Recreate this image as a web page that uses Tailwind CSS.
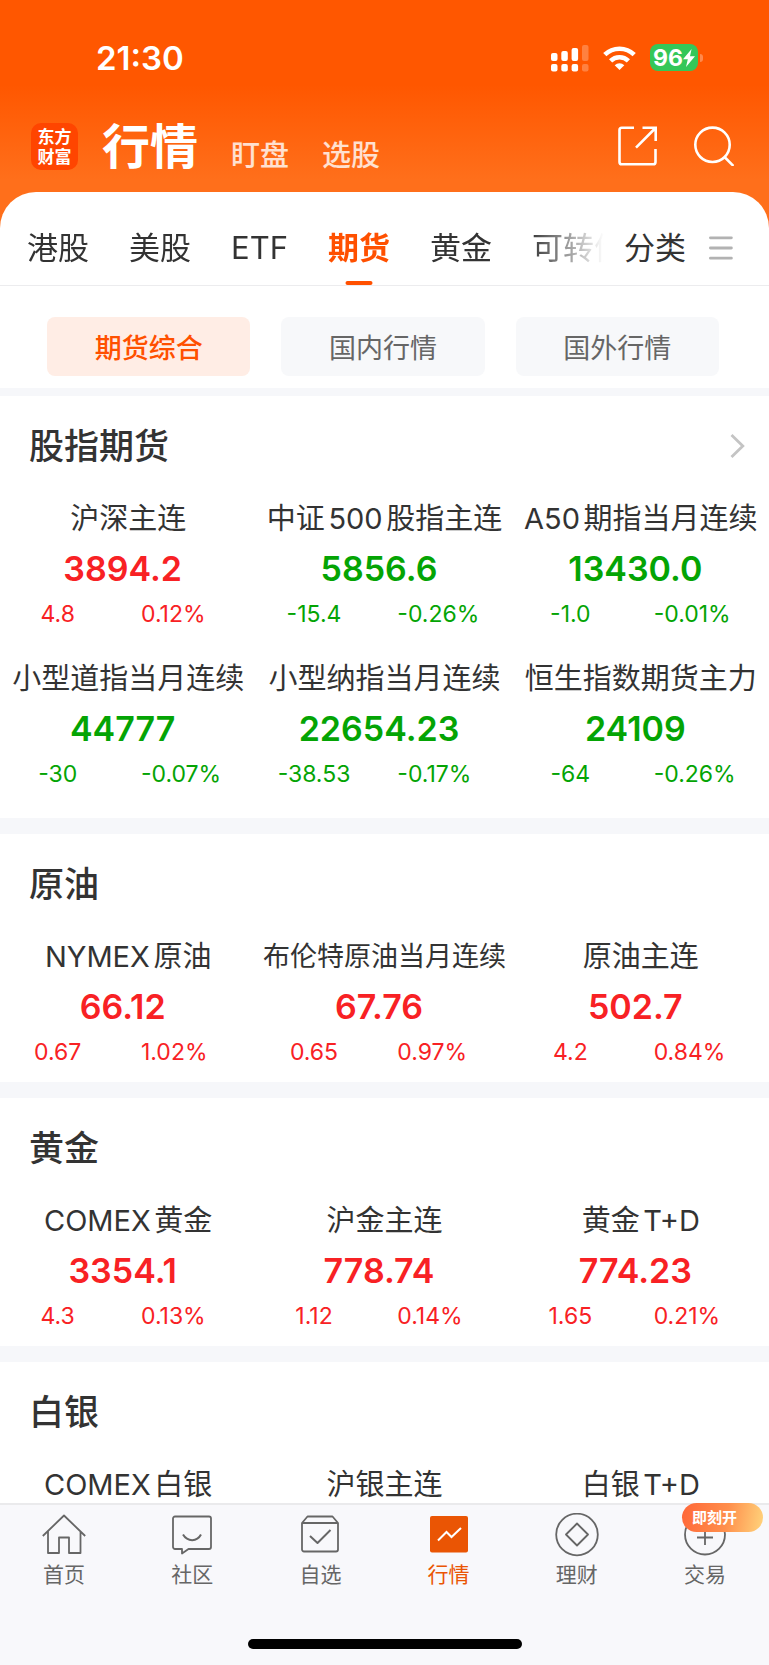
<!DOCTYPE html>
<html lang="zh-CN">
<head>
<meta charset="utf-8">
<meta name="viewport" content="width=device-width, initial-scale=1">
<title>行情 - 期货</title>
<script src="https://cdn.jsdelivr.net/npm/@tailwindcss/browser@4"></script>
</head>
<body class="flex h-screen flex-col overflow-hidden bg-[linear-gradient(180deg,#ff5700_0px,#ff5700_85px,#ff6f1b_180px)] font-['Inter','Noto_Sans_CJK_SC',sans-serif] text-[#333] [text-autospace:normal]">

<header class="shrink-0 text-white">
  <!-- Status bar -->
  <div class="flex h-[115px] items-center pr-[66px] pl-24">
    <span class="text-[33px] leading-10 font-semibold">21:30</span>
    <div class="ml-auto flex items-center gap-3.5">
      <svg class="h-7 w-[38px]" viewBox="0 0 38 28" fill="#fff" aria-hidden="true">
        <rect x="0" y="9" width="6.5" height="8" rx="2"/><rect x="10.300" y="7" width="6.500" height="10" rx="2"/><rect x="20.600" y="4" width="6.500" height="13" rx="2"/><rect x="31" y="1" width="6.500" height="16" rx="2" opacity=".25"/>
        <rect x="0" y="20" width="6.500" height="7.500" rx="2"/><rect x="10.300" y="20" width="6.500" height="7.500" rx="2"/><rect x="20.600" y="20" width="6.500" height="7.500" rx="2"/><rect x="31" y="20" width="6.500" height="7.500" rx="2" opacity=".25"/>
      </svg>
      <svg class="h-6 w-[33px]" viewBox="0 0 33 24" aria-hidden="true">
        <g fill="none" stroke="#fff" stroke-width="4.600"><path d="M1.800 8.700a21 21 0 0 1 29.400 0"/><path d="M7.600 14.800a12.800 12.800 0 0 1 17.800 0"/></g>
        <path d="M16.500 24l-4.800-4.800a7 7 0 0 1 9.600 0z" fill="#fff"/>
      </svg>
      <div class="flex items-center gap-0.5">
        <div class="flex h-[27px] w-12 items-center justify-center rounded-lg bg-[#34c759] text-[23px] leading-6 font-bold">96<svg class="h-[18px] w-3" viewBox="0 0 12 18" fill="#fff" aria-hidden="true"><path d="M8.600 0L0 10.300h4.800L3 18l9-10.800H7z"/></svg></div>
        <span class="h-2 w-[3px] rounded-r bg-white/30"></span>
      </div>
    </div>
  </div>
  <!-- Title bar -->
  <div class="flex h-[77px] items-start pr-[35px] pl-[31px]">
    <div class="mt-2 flex size-[47px] flex-col items-center justify-center rounded-[10px] bg-[#ff4500] text-[17px] leading-5 font-bold"><span>东方</span><span>财富</span></div>
    <div class="mt-0.5 ml-6 flex items-end gap-[33px]">
      <h1 class="text-5xl leading-[60px] font-bold">行情</h1>
      <a href="#watch" class="text-[29px] leading-[42px] font-medium text-white/80">盯盘</a>
      <a href="#pick" class="text-[29px] leading-[42px] font-medium text-white/80">选股</a>
    </div>
    <button type="button" aria-label="分享" class="mt-[11px] ml-auto">
      <svg class="size-10" viewBox="0 0 40 40" fill="none" stroke="#fff" stroke-width="2.600"><path d="M16 1.800H3.800a2.300 2.300 0 0 0-2.300 2.300v31.800a2.300 2.300 0 0 0 2.300 2.300h31.400a2.300 2.300 0 0 0 2.300-2.300V23"/><path d="M24.500 1.800h13.200V15M37.500 2L18 21.600"/></svg>
    </button>
    <button type="button" aria-label="搜索" class="mt-[11px] ml-9">
      <svg class="size-10" viewBox="0 0 40 40" fill="none" stroke="#fff" stroke-width="2.600"><circle cx="18.500" cy="18.800" r="17.200"/><path d="M30.500 31l9 9"/></svg>
    </button>
  </div>
</header>

<main class="flex min-h-0 flex-1 flex-col overflow-hidden rounded-t-[36px] bg-white">
  <!-- Market tabs -->
  <div class="flex h-[94px] shrink-0 border-b border-[#ececee] pr-9 pl-[27px]">
    <div class="flex min-w-0 flex-1 gap-10 overflow-hidden text-[31px] leading-[40px] whitespace-nowrap mask-[linear-gradient(90deg,#000_calc(100%_-_75px),transparent)]">
      <button type="button" class="shrink-0 pt-[18px]">港股</button>
      <button type="button" class="shrink-0 pt-[18px]">美股</button>
      <button type="button" class="shrink-0 pt-[18px]">ETF</button>
      <button type="button" class="relative shrink-0 pt-[18px] font-bold text-[#ff5000]">期货<span class="absolute bottom-0 left-1/2 h-1 w-[27px] -translate-x-1/2 rounded-full bg-[#ff5000]"></span></button>
      <button type="button" class="shrink-0 pt-[18px]">黄金</button>
      <button type="button" class="shrink-0 pt-[18px]">可转债</button>
    </div>
    <button type="button" class="ml-5 flex shrink-0 items-center gap-[23px] pt-[18px] text-[31px] leading-[40px]">分类
      <svg class="h-6 w-6" viewBox="0 0 24 24" stroke="#b2b2b2" stroke-width="2.800" stroke-linecap="round" aria-hidden="true"><path d="M1.400 1.800h21M1.400 12h21M1.400 22.200h21"/></svg>
    </button>
  </div>
  <!-- Scope switch -->
  <div class="flex h-[102px] shrink-0 items-start gap-[31px] pt-[31px] pr-[50px] pl-[47px] text-[27px] leading-9">
    <button type="button" class="h-[59px] flex-1 rounded-lg bg-[#ffede5] pt-1 font-medium text-[#ff5000]">期货综合</button>
    <button type="button" class="h-[59px] flex-1 rounded-lg bg-[#f7f8fa] pt-1 text-[#666]">国内行情</button>
    <button type="button" class="h-[59px] flex-1 rounded-lg bg-[#f7f8fa] pt-1 text-[#666]">国外行情</button>
  </div>
  <div class="h-2 shrink-0 bg-[#f6f7fa]"></div>

  <section class="shrink-0 border-b-16 border-[#f6f7fa] pb-3.5">
    <div class="flex h-[100px] items-center justify-between pr-6 pl-[29px]">
      <h2 class="text-[35px] leading-[50px] font-medium">股指期货</h2>
      <a href="#index" aria-label="更多"><svg class="h-6 w-[15px]" viewBox="0 0 15 24" fill="none" stroke="#c4c4c4" stroke-width="2.800"><path d="M1.500 1l11.300 11L1.500 23"/></svg></a>
    </div>
    <div class="grid grid-cols-3 gap-y-3 whitespace-nowrap">
      <article class="h-[148px] text-[#f82124]"><h3 class="text-center text-[29px] leading-[46px] text-[#333]">沪深主连</h3><p class="mt-[5px] pr-[11px] text-center text-[34px] leading-[44px] font-semibold">3894.2</p><p class="mt-[7px] flex text-[23px] leading-8"><span class="w-[45%] text-center">4.8</span><span class="pl-[10%]">0.12%</span></p></article>
      <article class="h-[148px] text-[#04a404]"><h3 class="text-center text-[29px] leading-[46px] text-[#333]">中证500股指主连</h3><p class="mt-[5px] pr-[11px] text-center text-[34px] leading-[44px] font-semibold">5856.6</p><p class="mt-[7px] flex text-[23px] leading-8"><span class="w-[45%] text-center">-15.4</span><span class="pl-[10%]">-0.26%</span></p></article>
      <article class="h-[148px] text-[#04a404]"><h3 class="text-center text-[29px] leading-[46px] text-[#333]">A50期指当月连续</h3><p class="mt-[5px] pr-[11px] text-center text-[34px] leading-[44px] font-semibold">13430.0</p><p class="mt-[7px] flex text-[23px] leading-8"><span class="w-[45%] text-center">-1.0</span><span class="pl-[10%]">-0.01%</span></p></article>
      <article class="h-[148px] text-[#04a404]"><h3 class="text-center text-[29px] leading-[46px] text-[#333]">小型道指当月连续</h3><p class="mt-[5px] pr-[11px] text-center text-[34px] leading-[44px] font-semibold">44777</p><p class="mt-[7px] flex text-[23px] leading-8"><span class="w-[45%] text-center">-30</span><span class="pl-[10%]">-0.07%</span></p></article>
      <article class="h-[148px] text-[#04a404]"><h3 class="text-center text-[29px] leading-[46px] text-[#333]">小型纳指当月连续</h3><p class="mt-[5px] pr-[11px] text-center text-[34px] leading-[44px] font-semibold">22654.23</p><p class="mt-[7px] flex text-[23px] leading-8"><span class="w-[45%] text-center">-38.53</span><span class="pl-[10%]">-0.17%</span></p></article>
      <article class="h-[148px] text-[#04a404]"><h3 class="text-center text-[29px] leading-[46px] text-[#333]">恒生指数期货主力</h3><p class="mt-[5px] pr-[11px] text-center text-[34px] leading-[44px] font-semibold">24109</p><p class="mt-[7px] flex text-[23px] leading-8"><span class="w-[45%] text-center">-64</span><span class="pl-[10%]">-0.26%</span></p></article>
    </div>
  </section>

  <section class="shrink-0 border-b-16 border-[#f6f7fa]">
    <h2 class="flex h-[100px] items-center pl-[29px] text-[35px] leading-[50px] font-medium">原油</h2>
    <div class="grid grid-cols-3 whitespace-nowrap text-[#f82124]">
      <article class="h-[148px]"><h3 class="text-center text-[29px] leading-[46px] text-[#333]">NYMEX原油</h3><p class="mt-[5px] pr-[11px] text-center text-[34px] leading-[44px] font-semibold">66.12</p><p class="mt-[7px] flex text-[23px] leading-8"><span class="w-[45%] text-center">0.67</span><span class="pl-[10%]">1.02%</span></p></article>
      <article class="h-[148px]"><h3 class="text-center text-[27px] leading-[46px] text-[#333]">布伦特原油当月连续</h3><p class="mt-[5px] pr-[11px] text-center text-[34px] leading-[44px] font-semibold">67.76</p><p class="mt-[7px] flex text-[23px] leading-8"><span class="w-[45%] text-center">0.65</span><span class="pl-[10%]">0.97%</span></p></article>
      <article class="h-[148px]"><h3 class="text-center text-[29px] leading-[46px] text-[#333]">原油主连</h3><p class="mt-[5px] pr-[11px] text-center text-[34px] leading-[44px] font-semibold">502.7</p><p class="mt-[7px] flex text-[23px] leading-8"><span class="w-[45%] text-center">4.2</span><span class="pl-[10%]">0.84%</span></p></article>
    </div>
  </section>

  <section class="shrink-0 border-b-16 border-[#f6f7fa]">
    <h2 class="flex h-[100px] items-center pl-[29px] text-[35px] leading-[50px] font-medium">黄金</h2>
    <div class="grid grid-cols-3 whitespace-nowrap text-[#f82124]">
      <article class="h-[148px]"><h3 class="text-center text-[29px] leading-[46px] text-[#333]">COMEX黄金</h3><p class="mt-[5px] pr-[11px] text-center text-[34px] leading-[44px] font-semibold">3354.1</p><p class="mt-[7px] flex text-[23px] leading-8"><span class="w-[45%] text-center">4.3</span><span class="pl-[10%]">0.13%</span></p></article>
      <article class="h-[148px]"><h3 class="text-center text-[29px] leading-[46px] text-[#333]">沪金主连</h3><p class="mt-[5px] pr-[11px] text-center text-[34px] leading-[44px] font-semibold">778.74</p><p class="mt-[7px] flex text-[23px] leading-8"><span class="w-[45%] text-center">1.12</span><span class="pl-[10%]">0.14%</span></p></article>
      <article class="h-[148px]"><h3 class="text-center text-[29px] leading-[46px] text-[#333]">黄金T+D</h3><p class="mt-[5px] pr-[11px] text-center text-[34px] leading-[44px] font-semibold">774.23</p><p class="mt-[7px] flex text-[23px] leading-8"><span class="w-[45%] text-center">1.65</span><span class="pl-[10%]">0.21%</span></p></article>
    </div>
  </section>

  <section class="shrink-0">
    <h2 class="flex h-[100px] items-center pl-[29px] text-[35px] leading-[50px] font-medium">白银</h2>
    <div class="grid grid-cols-3 text-center text-[29px] leading-[46px] whitespace-nowrap">
      <h3>COMEX白银</h3>
      <h3>沪银主连</h3>
      <h3>白银T+D</h3>
    </div>
  </section>
</main>

<footer class="flex h-[162px] shrink-0 flex-col border-t-2 border-[#eaeaec] bg-[#f8f8fb]">
  <nav class="grid grid-cols-6 pt-2 text-[21px] leading-7 text-[#666]">
    <a href="#home" class="flex flex-col items-center gap-1">
      <svg class="size-11" viewBox="0 0 44 44" fill="none" stroke="currentColor" stroke-width="1.800" stroke-linejoin="round"><path d="M.800 23L22 2.500 43.200 23M6 18.500V40h11V24.500h10V40h11.500V18.500"/></svg>首页</a>
    <a href="#community" class="flex flex-col items-center gap-1">
      <svg class="size-11" viewBox="0 0 44 44" fill="none" stroke="currentColor" stroke-width="1.800" stroke-linejoin="round"><path d="M5 3.500h34a2 2 0 0 1 2 2V34a2 2 0 0 1-2 2H18.500L12 40.500V36H5a2 2 0 0 1-2-2V5.500a2 2 0 0 1 2-2z"/><path d="M13 21.500c4.500 7.500 14 7.500 18 0" stroke-width="2"/></svg>社区</a>
    <a href="#favorites" class="flex flex-col items-center gap-1">
      <svg class="size-11" viewBox="0 0 44 44" fill="none" stroke="currentColor" stroke-width="1.800" stroke-linejoin="round"><path d="M4 10l5.500-6.500h25L40 10v26.500a2 2 0 0 1-2 2H6a2 2 0 0 1-2-2zM4 10h36"/><path d="M12 23l7.500 7L32.500 17" stroke-width="2"/></svg>自选</a>
    <a href="#market" aria-current="page" class="flex flex-col items-center gap-1 text-[#ea5504]">
      <svg class="size-11" viewBox="0 0 44 44"><rect x="3" y="3" width="38" height="36.500" rx="2" fill="currentColor"/><path d="M11 27.500l8.500-8.500 5 5 9.500-9" fill="none" stroke="#fff" stroke-width="2"/></svg>行情</a>
    <a href="#wealth" class="flex flex-col items-center gap-1">
      <svg class="size-11" viewBox="0 0 44 44" fill="none" stroke="currentColor" stroke-width="1.800" stroke-linejoin="round"><circle cx="22" cy="21.500" r="20.800"/><path d="M22 10.500l11 11-11 11-11-11z"/></svg>理财</a>
    <a href="#trade" class="relative flex flex-col items-center gap-1">
      <svg class="size-11" viewBox="0 0 44 44" fill="none" stroke="currentColor" stroke-width="1.800"><circle cx="22" cy="21.500" r="20"/><path d="M14 24.500h16M22 12v20"/></svg>交易
      <span class="absolute -top-2.5 right-1.5 h-[29px] w-[81px] rounded-full bg-[linear-gradient(100deg,#ff6738,#ff8f4c_55%,#ffd47c)] pl-2.5 text-[15px] leading-[29px] font-bold text-white">即刻开</span>
    </a>
  </nav>
  <div class="mx-auto mt-auto mb-4 h-2.5 w-[274px] rounded-full bg-black"></div>
</footer>
</body>
</html>
